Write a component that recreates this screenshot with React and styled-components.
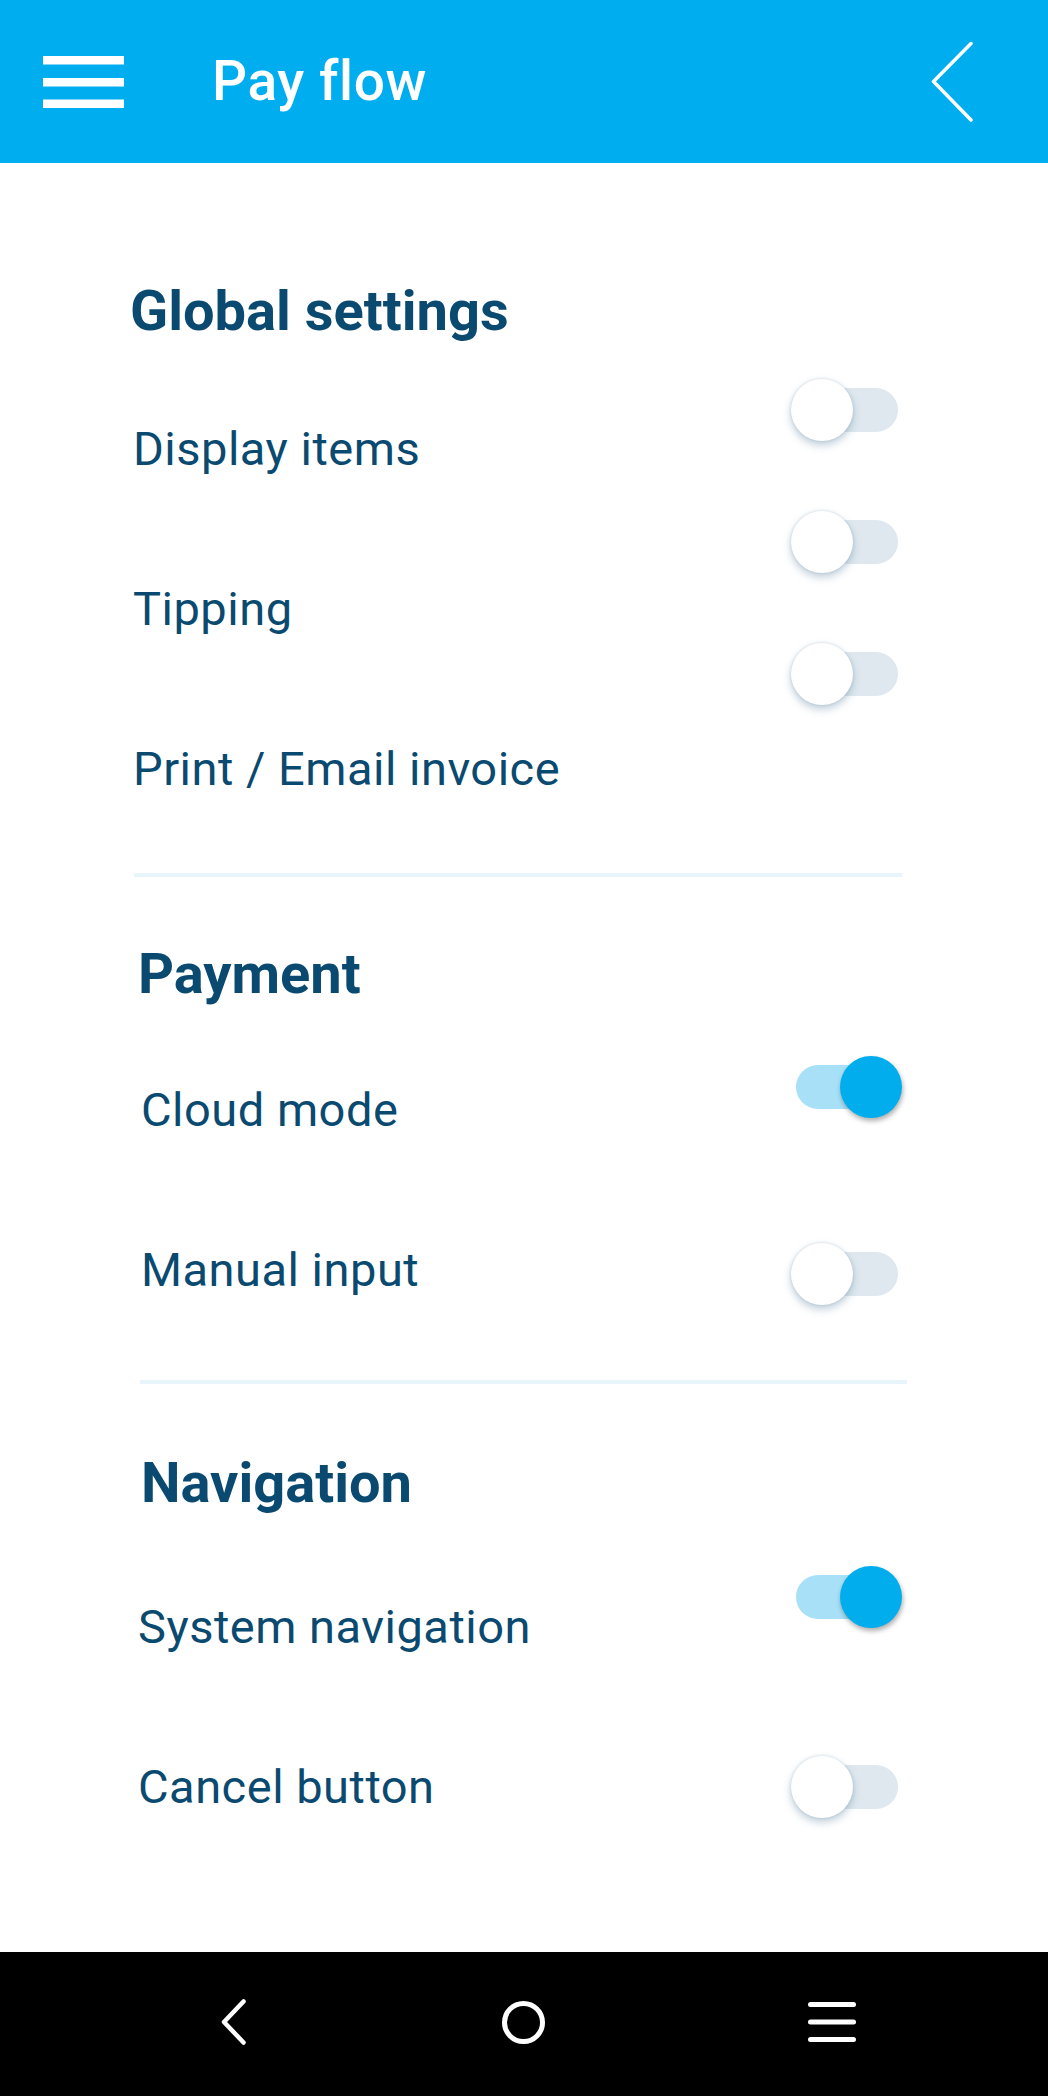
import React from 'react';
import styled, { createGlobalStyle } from 'styled-components';

const GlobalStyle = createGlobalStyle`
  body {
    margin: 0;
    background: #ffffff;
    font-family: Roboto, "Noto Sans", "Liberation Sans", sans-serif;
  }
`;

const Screen = styled.div`
  width: 1048px;
  height: 2096px;
  display: flex;
  flex-direction: column;
  background: #ffffff;
  overflow: hidden;
`;

const TopBar = styled.header`
  height: 163px;
  flex-shrink: 0;
  background: #00adef;
  display: flex;
  align-items: center;
  padding: 0 75px 0 43px;
  box-sizing: border-box;
`;

const Title = styled.h1`
  flex: 1;
  margin: 0 0 0 88px;
  color: #ffffff;
  font-size: 55px;
  font-weight: 500;
  letter-spacing: 0.6px;
  line-height: 1;
`;

const Content = styled.main`
  flex: 1;
  padding-top: 120px;
`;

const Section = styled.section`
  padding: ${p => p.top}px 146px 0 ${p => p.indent}px;
`;

const Heading = styled.h2`
  margin: 0;
  font-size: 56px;
  font-weight: 700;
  line-height: 1;
  color: #0a4a70;
`;

const Rows = styled.div`
  display: flex;
  justify-content: space-between;
  align-items: flex-start;
`;

const Labels = styled.div`
  display: flex;
  flex-direction: column;
  gap: 113px;
  padding-top: ${p => p.top}px;
  margin-left: ${p => p.shift}px;
`;

const Label = styled.span`
  font-size: 47px;
  letter-spacing: 0.5px;
  line-height: 1;
  color: #0a4a70;
  white-space: nowrap;
`;

const Switches = styled.div`
  display: flex;
  flex-direction: column;
  gap: ${p => p.gap}px;
  padding-top: ${p => p.top}px;
`;

const SwitchBox = styled.div`
  position: relative;
  width: 111px;
  height: 62px;
`;

const Track = styled.div`
  position: absolute;
  left: 5px;
  top: 9px;
  width: 102px;
  height: 44px;
  border-radius: 22px;
  background: ${p => (p.on ? '#a8e0f7' : '#dfe8ee')};
`;

const Knob = styled.div`
  position: absolute;
  top: 0;
  left: ${p => (p.on ? 49 : 0)}px;
  width: 62px;
  height: 62px;
  border-radius: 50%;
  background: ${p => (p.on ? '#02adee' : '#ffffff')};
  box-shadow: ${p =>
    p.on
      ? '1px 3px 5px rgba(0, 0, 0, 0.32)'
      : '0 4px 8px rgba(110, 145, 170, 0.45), 0 0 3px rgba(110, 145, 170, 0.3)'};
`;

const Divider = styled.hr`
  border: none;
  height: 4px;
  background: #e8f6fc;
  margin: ${p => p.top}px ${p => p.right}px 0 ${p => p.left}px;
`;

const NavBar = styled.nav`
  height: 144px;
  flex-shrink: 0;
  background: #000000;
  display: flex;
  align-items: center;
  padding: 0 0 4px 221px;
  box-sizing: border-box;
`;

const NavSlot = styled.div`
  display: flex;
  margin-left: ${p => p.gap || 0}px;
`;

const Toggle = ({ on }) => (
  <SwitchBox>
    <Track on={on ? 1 : 0} />
    <Knob on={on ? 1 : 0} />
  </SwitchBox>
);

const sections = [
  {
    title: 'Global settings',
    top: 0,
    indent: 130,
    shift: 3,
    labelTop: 86,
    switchTop: 40,
    switchGap: 70,
    items: [
      ['Display items', false],
      ['Tipping', false],
      ['Print / Email invoice', false],
    ],
  },
  {
    title: 'Payment',
    top: 69,
    indent: 138,
    shift: 3,
    labelTop: 84,
    switchTop: 54,
    switchGap: 125,
    items: [
      ['Cloud mode', true],
      ['Manual input', false],
    ],
  },
  {
    title: 'Navigation',
    top: 71,
    indent: 141,
    shift: -3,
    labelTop: 92,
    switchTop: 55,
    switchGap: 128,
    items: [
      ['System navigation', true],
      ['Cancel button', false],
    ],
  },
];

const dividers = [
  { top: 81, left: 134, right: 146 },
  { top: 75, left: 140, right: 141 },
];

const SettingsSection = ({ s }) => (
  <Section indent={s.indent} top={s.top}>
    <Heading>{s.title}</Heading>
    <Rows>
      <Labels top={s.labelTop} shift={s.shift}>
        {s.items.map(([name]) => (
          <Label key={name}>{name}</Label>
        ))}
      </Labels>
      <Switches top={s.switchTop} gap={s.switchGap}>
        {s.items.map(([name, on]) => (
          <Toggle key={name} on={on} />
        ))}
      </Switches>
    </Rows>
  </Section>
);

export default function App() {
  return (
    <Screen>
      <GlobalStyle />
      <TopBar>
        <svg width="81" height="52" viewBox="0 0 81 52">
          <rect x="0" y="0" width="81" height="8.5" fill="#fff" />
          <rect x="0" y="22" width="81" height="8.5" fill="#fff" />
          <rect x="0" y="43.5" width="81" height="8.5" fill="#fff" />
        </svg>
        <Title>Pay flow</Title>
        <svg width="42" height="80" viewBox="0 0 42 80">
          <polyline
            points="40,1.5 2.5,39.5 40,78"
            fill="none"
            stroke="#fff"
            strokeWidth="3.5"
            strokeLinecap="round"
            strokeLinejoin="round"
          />
        </svg>
      </TopBar>

      <Content>
        {sections.map((s, i) => (
          <React.Fragment key={s.title}>
            <SettingsSection s={s} />
            {dividers[i] && <Divider {...dividers[i]} />}
          </React.Fragment>
        ))}
      </Content>

      <NavBar>
        <NavSlot>
          <svg width="25" height="46" viewBox="0 0 25 46">
            <polyline
              points="22.5,2.5 3,23 22.5,43.5"
              fill="none"
              stroke="#fff"
              strokeWidth="4.5"
              strokeLinecap="round"
              strokeLinejoin="round"
            />
          </svg>
        </NavSlot>
        <NavSlot gap={256}>
          <svg width="43" height="43" viewBox="0 0 43 43">
            <circle cx="21.5" cy="21.5" r="19" fill="none" stroke="#fff" strokeWidth="5" />
          </svg>
        </NavSlot>
        <NavSlot gap={263}>
          <svg width="48" height="41" viewBox="0 0 48 41">
            <line x1="2.5" y1="2.5" x2="45.5" y2="2.5" stroke="#fff" strokeWidth="5" strokeLinecap="round" />
            <line x1="2.5" y1="20" x2="45.5" y2="20" stroke="#fff" strokeWidth="5" strokeLinecap="round" />
            <line x1="2.5" y1="37.5" x2="45.5" y2="37.5" stroke="#fff" strokeWidth="5" strokeLinecap="round" />
          </svg>
        </NavSlot>
      </NavBar>
    </Screen>
  );
}
